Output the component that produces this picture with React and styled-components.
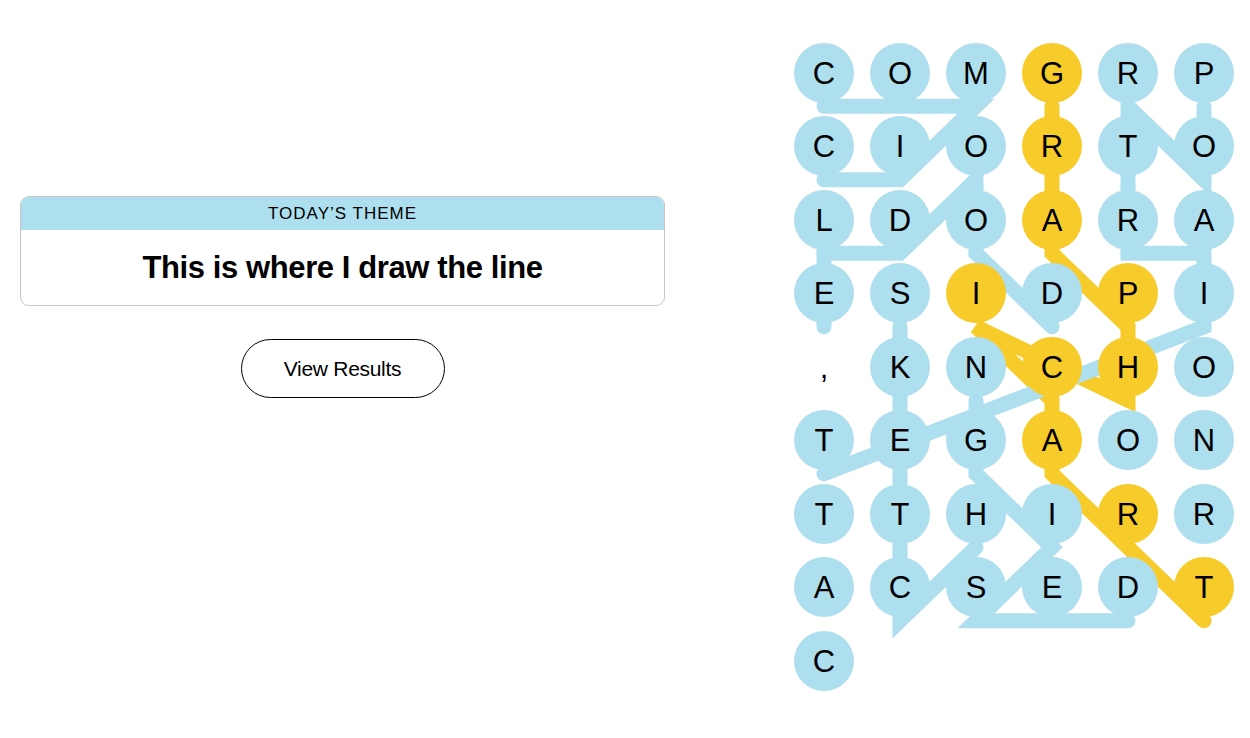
import React from 'react'
import styled, { createGlobalStyle } from 'styled-components'

const GlobalStyle = createGlobalStyle`
  body {
    margin: 0;
    background: #fff;
    font-family: 'Liberation Sans', Arial, sans-serif;
    color: #000;
  }
`

const BLUE = '#aedfee'
const YELLOW = '#f7cb2a'
const COL = 76
const ROW = 73.5
const LINE_SHIFT = 33.5

const GRID = [
  'COMGRP',
  'CIORTO',
  'LDOARA',
  'ESIDPI',
  ',KNCHO',
  'TEGAON',
  'TTHIRR',
  'ACSEDT',
  'C',
]

// the spangram, then the other found words, as [column, row] steps
const SPANGRAM = [[3, 0], [3, 1], [3, 2], [4, 3], [4, 4], [2, 3], [3, 4], [3, 5], [4, 6], [5, 7]]

const WORDS = [
  [[0, 0], [1, 0], [2, 0], [1, 1], [0, 1]],
  [[3, 3], [2, 2], [2, 1], [1, 2], [0, 2], [0, 3]],
  [[5, 0], [5, 1], [4, 0], [4, 1], [4, 2], [5, 2], [5, 3], [0, 5]],
  [[1, 3], [1, 4], [1, 5], [1, 6], [1, 7], [2, 6]],
  [[4, 7], [3, 7], [2, 7], [3, 6], [2, 5], [2, 4]],
]

const isSpangram = (c, r) => SPANGRAM.some(([x, y]) => x === c && y === r)

const Page = styled.div`
  display: flex;
  align-items: flex-start;
  width: 1250px;
  height: 738px;
`

const LeftPanel = styled.div`
  width: 645px;
  margin-left: 20px;
  padding-top: 196px;
  display: flex;
  flex-direction: column;
  align-items: center;
`

const ThemeCard = styled.div`
  width: 100%;
  box-sizing: border-box;
  border: 1px solid #c7c7c7;
  border-radius: 9px;
  overflow: hidden;
`

const ThemeHeader = styled.div`
  background: ${BLUE};
  height: 33px;
  display: flex;
  align-items: center;
  justify-content: center;
  font-size: 17px;
  letter-spacing: 1px;
  text-transform: uppercase;
`

const ThemeTitle = styled.h1`
  margin: 0;
  height: 75px;
  display: flex;
  align-items: center;
  justify-content: center;
  font-size: 31px;
  font-weight: 700;
  letter-spacing: -0.4px;
`

const ResultsButton = styled.button`
  margin-top: 33px;
  width: 204px;
  height: 59px;
  border: 1px solid #000;
  border-radius: 30px;
  background: #fff;
  font-family: 'Liberation Sans', Arial, sans-serif;
  font-size: 21px;
  letter-spacing: -0.3px;
  color: #000;
  cursor: pointer;
`

const Board = styled.div`
  position: relative;
  margin-left: 121px;
  margin-top: 36px;
  display: grid;
  grid-template-columns: repeat(6, ${COL}px);
  grid-auto-rows: ${ROW}px;
`

const Lines = styled.svg`
  position: absolute;
  left: 0;
  top: 0;
  overflow: visible;
  pointer-events: none;
`

const Cell = styled.div`
  position: relative;
  z-index: 1;
  display: flex;
  align-items: center;
  justify-content: center;
`

const Letter = styled.span`
  width: 60px;
  height: 60px;
  border-radius: 50%;
  background: ${p => (p.$bare ? 'transparent' : p.$span ? YELLOW : BLUE)};
  display: flex;
  align-items: center;
  justify-content: center;
  font-size: 31px;
  line-height: 1;
  padding-top: 1px;
  box-sizing: border-box;
`

const pts = path =>
  path.map(([c, r]) => `${COL / 2 + c * COL},${ROW / 2 + r * ROW + LINE_SHIFT}`).join(' ')

function App () {
  return (
    <Page>
      <GlobalStyle />
      <LeftPanel>
        <ThemeCard>
          <ThemeHeader>Today’s Theme</ThemeHeader>
          <ThemeTitle>This is where I draw the line</ThemeTitle>
        </ThemeCard>
        <ResultsButton>View Results</ResultsButton>
      </LeftPanel>
      <Board>
        <Lines width={COL * 6} height={ROW * 9}>
          <polyline points={pts(SPANGRAM)} fill='none' stroke={YELLOW} strokeWidth='15' strokeLinecap='round' strokeLinejoin='miter' />
          {WORDS.map((w, i) => (
            <polyline key={i} points={pts(w)} fill='none' stroke={BLUE} strokeWidth='15' strokeLinecap='round' strokeLinejoin='miter' />
          ))}
        </Lines>
        {GRID.map((row, r) =>
          row.split('').map((ch, c) => (
            <Cell key={`${r}-${c}`}>
              <Letter $span={isSpangram(c, r)} $bare={ch === ','}>{ch}</Letter>
            </Cell>
          ))
        )}
      </Board>
    </Page>
  )
}

export default App
